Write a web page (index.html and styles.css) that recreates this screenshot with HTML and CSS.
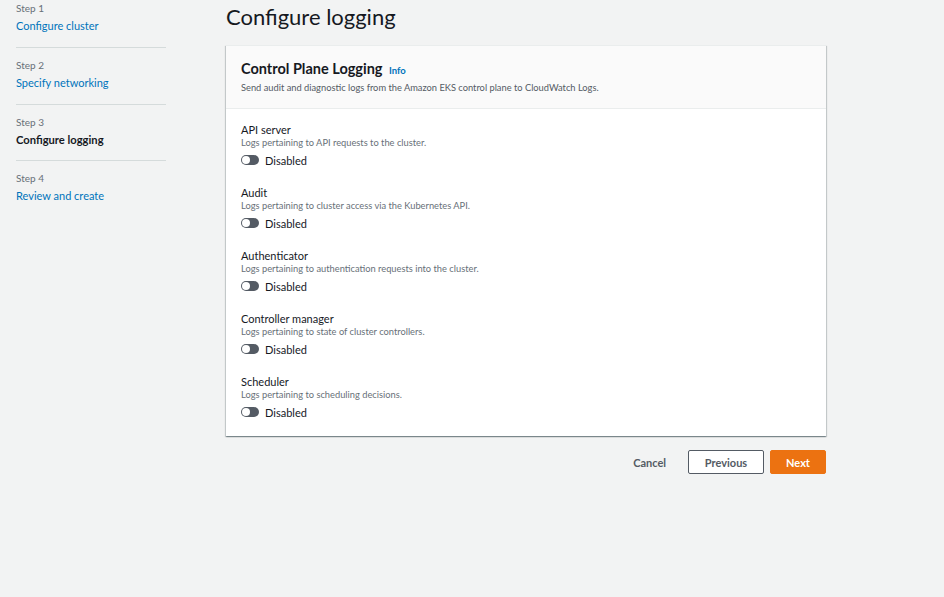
FILE: index.html
```html
<!DOCTYPE html>
<html>
<head>
<meta charset="utf-8">
<link rel="stylesheet" href="styles.css">
</head>
<body>
<div class="page">
  <nav class="steps">
    <div class="step">
      <div class="step-num">Step 1</div>
      <a class="step-link">Configure cluster</a>
    </div>
    <div class="step">
      <div class="step-num">Step 2</div>
      <a class="step-link">Specify networking</a>
    </div>
    <div class="step">
      <div class="step-num">Step 3</div>
      <span class="step-current">Configure logging</span>
    </div>
    <div class="step">
      <div class="step-num">Step 4</div>
      <a class="step-link">Review and create</a>
    </div>
  </nav>
  <main class="main">
    <h1 class="title">Configure logging</h1>
    <section class="card">
      <header class="card-head">
        <h2 class="card-title">Control Plane Logging <span class="info">Info</span></h2>
        <p class="card-desc">Send audit and diagnostic logs from the Amazon EKS control plane to CloudWatch Logs.</p>
      </header>
      <div class="card-body">
        <div class="field">
          <div class="label">API server</div>
          <div class="desc">Logs pertaining to API requests to the cluster.</div>
          <div class="toggle-row"><span class="toggle"><span class="knob"></span></span><span class="toggle-text">Disabled</span></div>
        </div>
        <div class="field">
          <div class="label">Audit</div>
          <div class="desc">Logs pertaining to cluster access via the Kubernetes API.</div>
          <div class="toggle-row"><span class="toggle"><span class="knob"></span></span><span class="toggle-text">Disabled</span></div>
        </div>
        <div class="field">
          <div class="label">Authenticator</div>
          <div class="desc">Logs pertaining to authentication requests into the cluster.</div>
          <div class="toggle-row"><span class="toggle"><span class="knob"></span></span><span class="toggle-text">Disabled</span></div>
        </div>
        <div class="field">
          <div class="label">Controller manager</div>
          <div class="desc">Logs pertaining to state of cluster controllers.</div>
          <div class="toggle-row"><span class="toggle"><span class="knob"></span></span><span class="toggle-text">Disabled</span></div>
        </div>
        <div class="field">
          <div class="label">Scheduler</div>
          <div class="desc">Logs pertaining to scheduling decisions.</div>
          <div class="toggle-row"><span class="toggle"><span class="knob"></span></span><span class="toggle-text">Disabled</span></div>
        </div>
      </div>
    </section>
    <div class="actions">
      <button class="btn btn-link">Cancel</button>
      <button class="btn btn-normal">Previous</button>
      <button class="btn btn-primary">Next</button>
    </div>
  </main>
</div>
</body>
</html>
```

FILE: styles.css
```css
html, body {
  margin: 0;
  padding: 0;
  background: #f2f3f3;
  font-family: Lato, "Noto Sans", sans-serif;
  color: #16191f;
}
.page {
  display: flex;
  align-items: flex-start;
  height: 597px;
}
.steps {
  width: 150px;
  margin-left: 16px;
  padding-top: 1px;
}
.step {
  border-bottom: 1px solid #d5dbdb;
  box-sizing: border-box;
  padding: 10px 0 11.5px;
}
.step:first-child { padding-top: 0; padding-bottom: 12px; }
.step:last-child { border-bottom: none; }
.step-num {
  font-size: 10px;
  line-height: 14px;
  color: #687078;
}
.step-link, .step-current {
  display: block;
  font-size: 11px;
  line-height: 18px;
  color: #0073bb;
  margin-top: 2px;
}
.step-current {
  color: #16191f;
  font-weight: 700;
  font-size: 11.2px;
}
.main {
  margin-left: 60px;
  width: 600px;
}
.title {
  margin: 3px 0 0;
  font-size: 22px;
  font-weight: 400;
  line-height: 28px;
  color: #16191f;
}
.card {
  margin-top: 14px;
  background: #fff;
  box-shadow: 0 1px 1px 0 rgba(0,28,36,.3), 1px 1px 1px 0 rgba(0,28,36,.15), -1px 1px 1px 0 rgba(0,28,36,.15);
  border-top: 1px solid #eaeded;
}
.card-head {
  background: #fafafa;
  border-bottom: 1px solid #eaeded;
  padding: 14px 15px 0;
  height: 63px;
  box-sizing: border-box;
}
.card-title {
  margin: 0;
  font-size: 14.5px;
  font-weight: 700;
  line-height: 18px;
}
.info {
  font-size: 9.5px;
  color: #0073bb;
  margin-left: 3px;
  font-weight: 700;
}
.card-desc {
  margin: 1px 0 0;
  font-size: 9.3px;
  line-height: 14px;
  color: #545b64;
}
.card-body {
  padding: 14px 15px 12px;
  display: flex;
  flex-direction: column;
  gap: 14px;
}
.field {
  height: 49px;
}
.label {
  font-size: 11px;
  line-height: 14px;
  color: #16191f;
}
.desc {
  font-size: 9.3px;
  line-height: 12px;
  color: #687078;
}
.toggle-row {
  display: flex;
  align-items: center;
  gap: 6px;
  margin-top: 3px;
  height: 16px;
}
.toggle {
  width: 18px;
  height: 10px;
  border-radius: 5px;
  background: #545b64;
  position: relative;
  display: inline-block;
}
.knob {
  position: absolute;
  left: 1px;
  top: 1px;
  width: 8px;
  height: 8px;
  border-radius: 50%;
  background: #fff;
}
.toggle-text {
  font-size: 11px;
  color: #16191f;
}
.actions {
  display: flex;
  justify-content: flex-end;
  align-items: center;
  margin-top: 14px;
  gap: 6px;
}
.btn {
  font-family: inherit;
  font-size: 11px;
  font-weight: 700;
  height: 24px;
  box-sizing: border-box;
  border-radius: 2px;
  cursor: pointer;
}
.btn-link {
  background: none;
  border: none;
  color: #545b64;
  padding: 0 16px;
}
.btn-normal {
  width: 76px;
  background: #fff;
  border: 1px solid #545b64;
  color: #545b64;
}
.btn-primary {
  width: 56px;
  background: #ec7211;
  border: 1px solid #ec7211;
  color: #fff;
}
```
